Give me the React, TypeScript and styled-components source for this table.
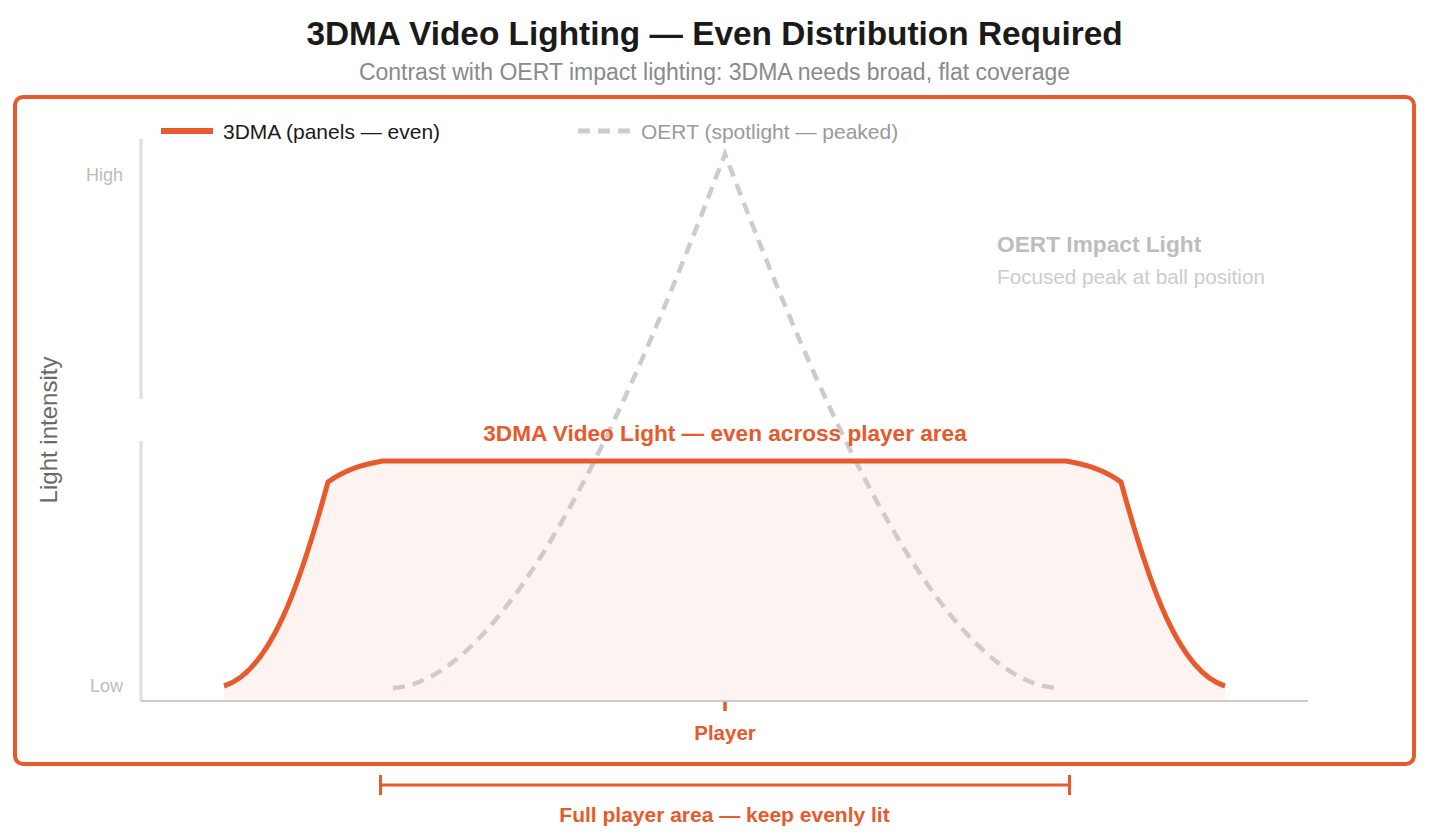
import React from 'react'
import styled, { createGlobalStyle } from 'styled-components'

const ORANGE = '#E8592B'

const GlobalStyle = createGlobalStyle`
  html, body {
    margin: 0;
    padding: 0;
    background: #ffffff;
  }
  body {
    font-family: 'Liberation Sans', Arial, sans-serif;
    color: #1a1a1a;
  }
`

const Page = styled.div`
  width: 1439px;
  height: 836px;
  overflow: hidden;
  display: flex;
  flex-direction: column;
`

const Header = styled.header`
  display: flex;
  flex-direction: column;
  align-items: center;
  padding: 15px 23px 0 13px;
`

const Title = styled.h1`
  margin: 0;
  font-size: 33.4px;
  line-height: 38px;
  font-weight: 700;
  color: #1a1a1a;
`

const Subtitle = styled.p`
  margin: 6px 0 0;
  font-size: 23px;
  line-height: 26px;
  color: #8a8a8a;
`

const ChartCard = styled.section`
  box-sizing: border-box;
  margin: 10px 0 0 13px;
  width: 1403px;
  height: 671px;
  border: 4px solid ${ORANGE};
  border-radius: 10px;
  overflow: hidden;

  svg {
    display: block;
  }
`

const Footer = styled.footer`
  display: flex;
  flex-direction: column;
  align-items: center;
  padding-left: 10px;
  margin-top: 9px;
`

const SpanLabel = styled.div`
  margin-top: 8px;
  font-size: 21px;
  line-height: 24px;
  font-weight: 700;
  color: ${ORANGE};
`

// chart uses page coordinates, the viewBox starts at the card's inner corner
const Chart: React.FC = () => (
  <svg width={1395} height={663} viewBox="17 99 1395 663" fontFamily="'Liberation Sans', Arial, sans-serif">
    {/* legend */}
    <line x1={161} y1={131} x2={213} y2={131} stroke={ORANGE} strokeWidth={6} />
    <text x={223} y={138.5} fontSize={21} fill="#1a1a1a">3DMA (panels — even)</text>
    <line x1={578} y1={131} x2={632} y2={131} stroke="#cccccc" strokeWidth={5} strokeDasharray="12 8" />
    <text x={641} y={138.5} fontSize={21} fill="#9a9a9a">OERT (spotlight — peaked)</text>

    {/* axes */}
    <line x1={141} y1={139} x2={141} y2={399} stroke="#e2e2e2" strokeWidth={3.5} />
    <line x1={141} y1={441} x2={141} y2={701} stroke="#e2e2e2" strokeWidth={3.5} />
    <line x1={141} y1={701} x2={1308} y2={701} stroke="#cccccc" strokeWidth={2} />
    <text x={123} y={180.5} fontSize={18} fill="#bdbdbd" textAnchor="end">High</text>
    <text x={123} y={691.5} fontSize={18} fill="#bdbdbd" textAnchor="end">Low</text>
    <text transform="translate(57 430) rotate(-90)" fontSize={24} fill="#6a6a6a" textAnchor="middle">Light intensity</text>

    {/* 3DMA even fill */}
    <path
      d="M224,686 C270,672 300,585 328,482 Q350,466 383,461 L1066,461 Q1099,466 1121,482 C1149,585 1179,672 1225,686 L1225,700 L224,700 Z"
      fill="#fdf3f0"
    />

    {/* OERT spotlight */}
    <path
      d="M393,688 C520,680 650,350 725,154 C800,350 930,680 1057,688"
      fill="none"
      stroke="#cccccc"
      strokeWidth={4.5}
      strokeDasharray="12 8"
    />

    {/* 3DMA even line */}
    <path
      d="M224,686 C270,672 300,585 328,482 Q350,466 383,461 L1066,461 Q1099,466 1121,482 C1149,585 1179,672 1225,686"
      fill="none"
      stroke={ORANGE}
      strokeWidth={5}
    />

    <text x={725} y={441} fontSize={22.6} fontWeight={700} fill={ORANGE} textAnchor="middle">
      3DMA Video Light — even across player area
    </text>

    <text x={997} y={252} fontSize={22.7} fontWeight={700} fill="#bdbdbd">OERT Impact Light</text>
    <text x={997} y={284} fontSize={20.7} fill="#cccccc">Focused peak at ball position</text>

    {/* player marker */}
    <line x1={725} y1={702} x2={725} y2={711} stroke={ORANGE} strokeWidth={3.5} />
    <text x={725} y={740} fontSize={20.5} fontWeight={700} fill={ORANGE} textAnchor="middle">Player</text>
  </svg>
)

const Bracket: React.FC<{ width: number }> = ({ width }) => (
  <svg width={width} height={20} viewBox={`0 0 ${width} 20`}>
    <line x1={1.5} y1={0} x2={1.5} y2={20} stroke={ORANGE} strokeWidth={3} />
    <line x1={1.5} y1={10} x2={width - 1.5} y2={10} stroke={ORANGE} strokeWidth={3} />
    <line x1={width - 1.5} y1={0} x2={width - 1.5} y2={20} stroke={ORANGE} strokeWidth={3} />
  </svg>
)

export default function App() {
  return (
    <Page>
      <GlobalStyle />
      <Header>
        <Title>3DMA Video Lighting — Even Distribution Required</Title>
        <Subtitle>Contrast with OERT impact lighting: 3DMA needs broad, flat coverage</Subtitle>
      </Header>
      <ChartCard>
        <Chart />
      </ChartCard>
      <Footer>
        <Bracket width={692} />
        <SpanLabel>Full player area — keep evenly lit</SpanLabel>
      </Footer>
    </Page>
  )
}
